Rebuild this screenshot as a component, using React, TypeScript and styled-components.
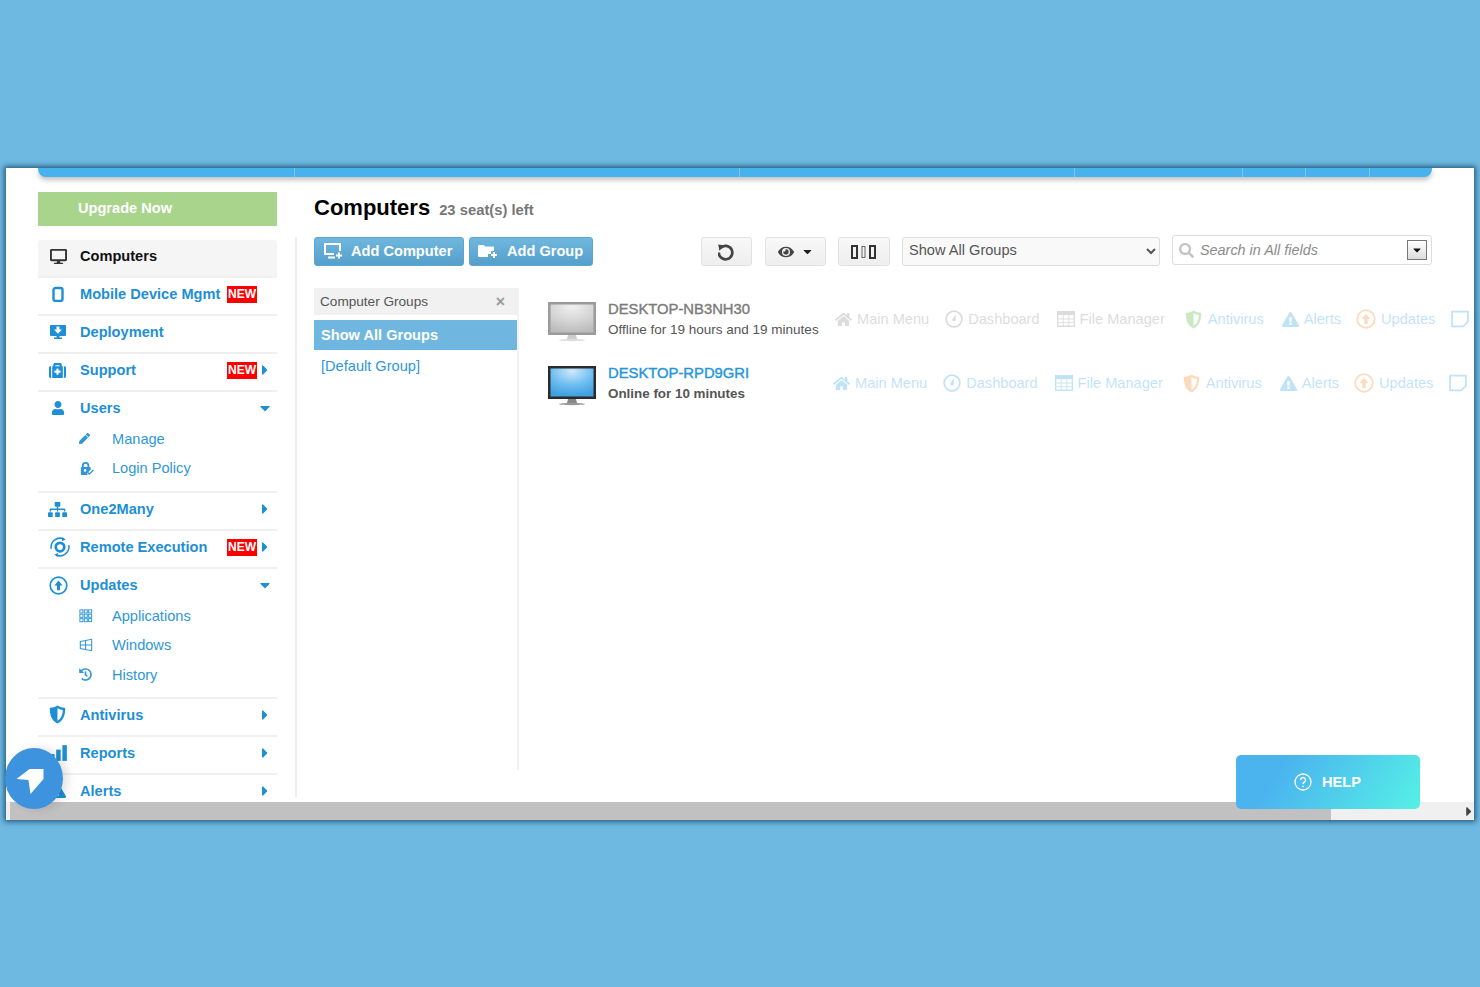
import { FC, ReactNode } from 'react';
import styled, { createGlobalStyle } from 'styled-components';
import {
  FaCaretDown,
  FaCaretRight,
  FaDesktop,
  FaExclamationTriangle,
  FaEye,
  FaHistory,
  FaHome,
  FaMedkit,
  FaPen,
  FaSearch,
  FaSitemap,
  FaUser,
} from 'react-icons/fa';

const GlobalStyle = createGlobalStyle`
  html, body {
    margin: 0;
    padding: 0;
    background: #6db9e1;
  }
  * {
    box-sizing: border-box;
  }
  body {
    font-family: 'Liberation Sans', Arial, sans-serif;
  }
`;

const Page = styled.div`
  height: 987px;
  padding: 168px 6px 167px;
  overflow: hidden;
`;

const Window = styled.div`
  position: relative;
  height: 652px;
  background: #fff;
  display: flex;
  flex-direction: column;
  box-shadow: 0 0 5px 2px #2a5f80;
`;

const TopBar = styled.div`
  flex: none;
  height: 9px;
  margin: 0 42px 0 32px;
  display: flex;
  background: #47b3ee;
  border-radius: 0 0 8px 8px;
  box-shadow: 0 3px 5px rgba(0, 0, 0, 0.25);
`;

const TopSeg = styled.div<{ $w: number }>`
  flex: none;
  width: ${(p) => p.$w}px;
  border-right: 1px solid #7cc6ef;
`;

const Viewport = styled.div`
  flex: 1;
  min-height: 0;
  overflow: hidden;
  display: flex;
  padding: 15px 0 0 32px;
`;

const Sidebar = styled.div`
  flex: none;
  width: 239px;
`;

const Upgrade = styled.div`
  height: 34px;
  margin-bottom: 14px;
  padding-left: 40px;
  background: #a9d48c;
  color: #fff;
  font-size: 14.6px;
  font-weight: 700;
  line-height: 33px;
`;

const Group = styled.div<{ $pad?: number }>`
  border-bottom: 2px solid #f0f0f0;
  padding-bottom: ${(p) => p.$pad ?? 0}px;
`;

const Row = styled.div<{ $active?: boolean }>`
  height: 36px;
  padding-bottom: 4px;
  display: flex;
  align-items: center;
  color: ${(p) => (p.$active ? '#111' : '#1e8fd5')};
  background: ${(p) => (p.$active ? '#f5f5f5' : 'transparent')};
  border-radius: ${(p) => (p.$active ? '3px 3px 0 0' : '0')};
  font-size: 14.6px;
  font-weight: 700;
`;

const RowIcon = styled.span<{ $x?: number }>`
  flex: none;
  width: 42px;
  padding-left: ${(p) => p.$x ?? 12}px;
  display: flex;
  align-items: center;
  color: inherit;
`;

const RowLabel = styled.span`
  flex: 1;
  white-space: nowrap;
`;

const NewBadge = styled.span`
  flex: none;
  width: 30px;
  height: 17px;
  background: #f00;
  color: #fff;
  font-size: 12px;
  font-weight: 700;
  line-height: 17px;
  text-align: center;
`;

const MobileBadge = styled(NewBadge)`
  margin: 0 20px 0 -56px;
`;

const Caret = styled.span`
  flex: none;
  width: 20px;
  padding-right: 4px;
  display: flex;
  justify-content: center;
  color: #1e8fd5;
  font-size: 16px;
`;

const SubList = styled.div`
  margin-top: -4px;
`;

const SubRow = styled.div`
  height: 29.5px;
  display: flex;
  align-items: center;
  padding-left: 41px;
  color: #2f97d8;
  font-size: 14.6px;
`;

const SubIcon = styled.span`
  flex: none;
  width: 33px;
  display: flex;
  align-items: center;
`;

const Main = styled.div`
  flex: 1;
  min-width: 0;
  padding-left: 37px;
`;

const TitleRow = styled.div`
  height: 45px;
  display: flex;
  align-items: baseline;
  padding-top: 3px;
`;

const Title = styled.h1`
  margin: 0;
  color: #000;
  font-size: 22px;
  font-weight: 700;
`;

const Seats = styled.span`
  margin-left: 9px;
  color: #777;
  font-size: 14.8px;
  font-weight: 700;
`;

const Work = styled.div`
  height: 560px;
  margin-left: -19px;
  padding-left: 17px;
  border-left: 2px solid #eee;
`;

const Toolbar = styled.div`
  height: 30px;
  width: 1118px;
  display: flex;
  align-items: flex-start;
`;

const PrimaryButton = styled.button<{ $w: number }>`
  flex: none;
  width: ${(p) => p.$w}px;
  height: 29px;
  margin-right: 5px;
  padding: 0 0 2px 8px;
  display: flex;
  align-items: center;
  gap: 8px;
  background: linear-gradient(#6fb7de, #559fcc);
  border: 1px solid #5ba6d1;
  border-radius: 3px;
  color: #fff;
  font-family: inherit;
  font-size: 14.6px;
  font-weight: 700;
`;

const GreyButton = styled.button<{ $w: number; $ml: number }>`
  flex: none;
  width: ${(p) => p.$w}px;
  height: 29px;
  margin-left: ${(p) => p.$ml}px;
  padding: 0;
  display: flex;
  align-items: center;
  justify-content: center;
  gap: 7px;
  background: linear-gradient(#f8f8f8, #eee);
  border: 1px solid #e2e2e2;
  border-radius: 3px;
  color: #444;
`;

const GroupSelect = styled.select`
  flex: none;
  width: 258px;
  height: 29px;
  margin-left: 12px;
  padding: 0 0 3px 2px;
  background: #f9f9f9;
  border: 1px solid #ddd;
  border-radius: 3px;
  color: #555;
  font-family: inherit;
  font-size: 14.6px;
`;

const SearchBox = styled.div`
  flex: none;
  width: 260px;
  height: 30px;
  margin: -2px 0 0 12px;
  padding: 0 4px 0 6px;
  display: flex;
  align-items: center;
  background: #fff;
  border: 1px solid #ddd;
  border-radius: 3px;
  color: #c4c4c4;
`;

const SearchText = styled.span`
  flex: 1;
  margin-left: 6px;
  color: #8b8b8b;
  font-size: 14.4px;
  font-style: italic;
`;

const SearchDrop = styled.span`
  flex: none;
  width: 20px;
  height: 20px;
  display: flex;
  align-items: center;
  justify-content: center;
  background: linear-gradient(#fff, #ddd);
  border: 1px solid #777;
  color: #111;
  font-size: 12px;
`;

const Panels = styled.div`
  display: flex;
  margin-top: 21px;
`;

const GroupsPanel = styled.div`
  flex: none;
  width: 205px;
  height: 482px;
  border-right: 2px solid #f2f2f2;
`;

const GroupsHead = styled.div`
  height: 27px;
  padding: 0 12px 0 6px;
  display: flex;
  align-items: center;
  justify-content: space-between;
  background: #f1f1f1;
  color: #555;
  font-size: 13.6px;
`;

const GroupsClose = styled.span`
  color: #999;
  font-size: 16px;
  font-weight: 700;
`;

const GroupItem = styled.div<{ $active?: boolean }>`
  height: ${(p) => (p.$active ? '30px' : '32px')};
  margin-top: ${(p) => (p.$active ? '5px' : '0')};
  padding-left: 7px;
  display: flex;
  align-items: center;
  background: ${(p) => (p.$active ? '#6fb7e0' : 'transparent')};
  color: ${(p) => (p.$active ? '#fff' : '#2f97d8')};
  font-size: 14.6px;
  font-weight: ${(p) => (p.$active ? 700 : 400)};
`;

const Computers = styled.div`
  flex: 1;
  min-width: 0;
  padding: 13px 0 0 29px;
  overflow: hidden;
`;

const ComputerRow = styled.div`
  height: 64px;
  width: 940px;
  display: flex;
  align-items: flex-start;
`;

const MonitorWrap = styled.span`
  flex: none;
  margin-top: 1px;
`;

const Info = styled.div<{ $w: number }>`
  flex: none;
  width: ${(p) => p.$w}px;
  margin-left: 12px;
`;

const HostName = styled.div<{ $online?: boolean }>`
  color: ${(p) => (p.$online ? '#2496da' : '#7b7b7b')};
  font-size: 14.8px;
  line-height: 17px;
  white-space: nowrap;
  -webkit-text-stroke: 0.4px currentColor;
`;

const HostStatus = styled.div<{ $online?: boolean }>`
  margin-top: 4px;
  color: #555;
  font-size: ${(p) => (p.$online ? '13.4px' : '13.5px')};
  font-weight: ${(p) => (p.$online ? 700 : 400)};
  line-height: 16px;
  white-space: nowrap;
`;

const Actions = styled.div`
  flex: none;
  display: flex;
  align-items: center;
  margin-top: 8px;
  opacity: 0.3;
`;

const Action = styled.span<{ $c: string; $icon?: string; $gap: number }>`
  flex: none;
  display: flex;
  align-items: center;
  gap: 5px;
  margin-right: ${(p) => p.$gap}px;
  color: ${(p) => p.$c};
  font-size: 14.6px;
  white-space: nowrap;

  svg {
    color: ${(p) => p.$icon ?? p.$c};
  }
`;

const ScrollBar = styled.div`
  flex: none;
  height: 18px;
  padding-left: 4px;
  display: flex;
  align-items: stretch;
  background: #f0f0f0;
`;

const ScrollThumb = styled.div`
  flex: none;
  width: 1321px;
  background: #c1c1c1;
`;

const ScrollArrow = styled.span`
  margin-left: auto;
  width: 10px;
  display: flex;
  align-items: center;
  color: #444;
  font-size: 15px;
`;

const Fab = styled.div`
  position: absolute;
  left: -1px;
  top: 580px;
  width: 58px;
  height: 61px;
  padding-right: 8px;
  border-radius: 50%;
  display: flex;
  align-items: center;
  justify-content: center;
  background: #3d93dd;
  box-shadow: 5px 0 10px rgba(0, 0, 0, 0.12);
`;

const Help = styled.div`
  position: absolute;
  right: 54px;
  bottom: 11px;
  width: 184px;
  height: 54px;
  padding-left: 58px;
  display: flex;
  align-items: center;
  gap: 10px;
  border-radius: 5px;
  background: linear-gradient(125deg, #4bb4ef 25%, #55f1e6 100%);
  color: #fff;
  font-size: 14.6px;
  font-weight: 700;
`;

const Svg: FC<{ s?: number; children: ReactNode }> = ({ s = 16, children }) => (
  <svg width={s} height={s} viewBox="0 0 16 16" fill="currentColor" stroke="none">
    {children}
  </svg>
);

const MobileIcon = () => (
  <Svg>
    <rect x="3.500" y="2" width="9" height="13" rx="2" fill="none" stroke="currentColor" strokeWidth="2.400" />
  </Svg>
);

const DeployIcon = () => (
  <Svg>
    <path d="M1 1h14a1 1 0 0 1 1 1v9a1 1 0 0 1-1 1H9.500v1.500H12V15H4v-1.500h2.500V12H1a1 1 0 0 1-1-1V2a1 1 0 0 1 1-1z" />
    <path d="M6.500 2.500h3V5.500H12L8 9.800 4 5.500h2.500z" fill="#fff" />
  </Svg>
);

const PolicyIcon = () => (
  <Svg s={15}>
    <path d="M3 6.500V5a4 4 0 0 1 8 0v1.500h.5a1 1 0 0 1 1 1V9L8.500 13l.7 2H3a1 1 0 0 1-1-1V7.500a1 1 0 0 1 1-1zm2 0h4V5a2 2 0 0 0-4 0z" fillRule="evenodd" />
    <circle cx="6.500" cy="10" r="1.400" fill="#fff" />
    <path d="M9 12l2 2 4.500-4.500" fill="none" stroke="currentColor" strokeWidth="1.500" />
  </Svg>
);

const RemoteIcon = () => (
  <Svg s={20}>
    <path d="M1 9.500A7.200 7.200 0 0 1 11 1.600M15 6.500A7.200 7.200 0 0 1 5 14.400" fill="none" stroke="currentColor" strokeWidth="1.200" />
    <path d="M10 0l2.500 2-3 1.300zM6 16l-2.500-2 3-1.300z" />
    <circle cx="8" cy="8" r="3.400" fill="none" stroke="currentColor" strokeWidth="2.200" />
  </Svg>
);

const UpCircle: FC<{ s?: number }> = ({ s = 19 }) => (
  <Svg s={s}>
    <circle cx="8" cy="8" r="7" fill="none" stroke="currentColor" strokeWidth="1.400" />
    <path d="M8 3.800L11.500 8H9.300v4H6.700V8H4.500z" />
  </Svg>
);

const GridIcon = () => (
  <Svg s={14}>
    {[1, 6, 11].map((x) =>
      [1, 6, 11].map((y) => (
        <rect key={`${x}-${y}`} x={x} y={y} width="3.500" height="3.500" fill="none" stroke="currentColor" strokeWidth="1.100" />
      )),
    )}
  </Svg>
);

const WindowsIcon = () => (
  <Svg s={14}>
    <path d="M1.500 4l13-2.500v13L1.500 12zM1.500 8h13M7.500 3v10" fill="none" stroke="currentColor" strokeWidth="1.200" />
  </Svg>
);

const ShieldIcon: FC<{ s?: number }> = ({ s = 19 }) => (
  <Svg s={s}>
    <path d="M8 .5c2 1.300 4 1.800 6.500 2 0 5.500-1.200 10.500-6.500 13-5.300-2.500-6.500-7.500-6.500-13C4 2.300 6 1.800 8 .5zm0 2.200v10.600c3.300-2 4.300-5.300 4.500-9.100C11 4 9.500 3.500 8 2.700z" fillRule="evenodd" />
  </Svg>
);

const BarsIcon = () => (
  <Svg s={18}>
    <rect x="0" y="9" width="4" height="6" />
    <rect x="5.500" y="5" width="4" height="10" />
    <rect x="11" y="1" width="4" height="14" />
  </Svg>
);

const DialIcon = () => (
  <Svg s={18}>
    <circle cx="8" cy="8" r="7" fill="none" stroke="currentColor" strokeWidth="1.500" />
    <path d="M9.600 4L9.500 9a1.500 1.500 0 1 1-2.800-1z" />
  </Svg>
);

const TableIcon = () => (
  <Svg s={18}>
    <path d="M.5 1.500h15v13H.5z" fill="none" stroke="currentColor" strokeWidth="1.300" />
    <path d="M.5 1.500h15v3H.5z" />
    <path d="M.5 8h15M.5 11.200h15M5.500 4.500v10M10.500 4.500v10" fill="none" stroke="currentColor" strokeWidth=".8" />
  </Svg>
);

const NoteIcon = () => (
  <Svg s={18}>
    <path d="M1 1.500h14v9l-4 4H1z" fill="none" stroke="currentColor" strokeWidth="1.600" />
  </Svg>
);

const ColumnsIcon = () => (
  <svg width="26" height="16" viewBox="0 0 26 16" fill="none" stroke="#333">
    <rect x="1" y="2" width="5" height="12" strokeWidth="2" />
    <rect x="11" y="2.500" width="3" height="11" strokeWidth="1" stroke="#666" />
    <rect x="19" y="2" width="5" height="12" strokeWidth="2" />
  </svg>
);

const RefreshIcon = () => (
  <Svg s={18}>
    <g transform="translate(-1.300 0)">
      <path d="M3.600 4.400A6 6 0 1 1 2 8.500" fill="none" stroke="currentColor" strokeWidth="2.400" />
      <path d="M1.500 1.300l6 .9-5 4.700z" />
    </g>
  </Svg>
);

const AddComputerIcon = () => (
  <svg width="20" height="18" viewBox="0 0 20 18" fill="none" stroke="#fff" strokeWidth="2">
    <path d="M11 12H2V2h15v7" />
    <path d="M5 15.500h7" />
    <path d="M16 10.500v6M13 13.500h6" />
  </svg>
);

const AddGroupIcon = () => (
  <svg width="21" height="16" viewBox="0 0 21 16" fill="#fff">
    <path d="M0 3a1 1 0 0 1 1-1h5l1 1.500h8a1 1 0 0 1 1 1V8h-3v3h-3v3H1a1 1 0 0 1-1-1z" />
    <path d="M16 9v3h3M16 15v-3h-3" fill="none" stroke="#fff" strokeWidth="2" />
  </svg>
);

const HelpIcon = () => (
  <svg width="18" height="18" viewBox="0 0 18 18" fill="none" stroke="#fff">
    <circle cx="9" cy="9" r="8" strokeWidth="1.300" />
    <path d="M6.500 7a2.500 2.500 0 1 1 3.800 2.100C9.400 9.700 9 10.200 9 11" strokeWidth="1.400" />
    <circle cx="9" cy="13.300" r=".9" fill="#fff" stroke="none" />
  </svg>
);

const Monitor: FC<{ online?: boolean }> = ({ online }) => (
  <svg width="48" height="42" viewBox="0 0 48 42">
    <defs>
      <radialGradient id={online ? 'scrOn' : 'scrOff'} cx="50%" cy="10%" r="90%">
        <stop offset="0%" stopColor={online ? '#cfe9fb' : '#efefef'} />
        <stop offset="55%" stopColor={online ? '#6dbdf0' : '#d5d5d5'} />
        <stop offset="100%" stopColor={online ? '#3f9fe0' : '#bcbcbc'} />
      </radialGradient>
    </defs>
    <rect x="0" y="0" width="48" height="33" fill={online ? '#2b2b2b' : '#9a9a9a'} />
    <rect x="2.500" y="2.500" width="43" height="28" fill={`url(#${online ? 'scrOn' : 'scrOff'})`} />
    <path d="M20 33h8l1 4h-10z" fill={online ? '#888' : '#ccc'} />
    <ellipse cx="24" cy="38" rx="13" ry="1.200" fill={online ? '#999' : '#ddd'} />
  </svg>
);

const RowActions: FC<{ online?: boolean }> = ({ online }) => {
  const grey = online ? '#35a5ea' : '#8f8f8f';
  return (
    <Actions>
      <Action $c={grey} $gap={16}>
        <FaHome size={17} />
        Main Menu
      </Action>
      <Action $c={grey} $gap={17}>
        <DialIcon />
        Dashboard
      </Action>
      <Action $c={grey} $gap={19}>
        <TableIcon />
        File Manager
      </Action>
      <Action $c="#35a5ea" $icon={online ? '#f58a2c' : '#55b83c'} $gap={18}>
        <ShieldIcon />
        Antivirus
      </Action>
      <Action $c="#35a5ea" $gap={15}>
        <FaExclamationTriangle size={17} />
        Alerts
      </Action>
      <Action $c="#35a5ea" $icon="#f58a2c" $gap={16}>
        <UpCircle s={20} />
        Updates
      </Action>
      <Action $c="#35a5ea" $gap={0}>
        <NoteIcon />
      </Action>
    </Actions>
  );
};

const App: FC = () => {
  return (
    <Page>
      <GlobalStyle />
      <Window>
        <TopBar>
          {[257, 445, 335, 168, 63, 64].map((w) => (
            <TopSeg key={w} $w={w} />
          ))}
        </TopBar>
        <Viewport>
          <Sidebar>
            <Upgrade>Upgrade Now</Upgrade>
            <Group>
              <Row $active>
                <RowIcon><FaDesktop size={17} color="#333" /></RowIcon>
                <RowLabel>Computers</RowLabel>
              </Row>
            </Group>
            <Group>
              <Row>
                <RowIcon><MobileIcon /></RowIcon>
                <RowLabel>Mobile Device Mgmt</RowLabel>
                <MobileBadge>NEW</MobileBadge>
              </Row>
            </Group>
            <Group>
              <Row>
                <RowIcon><DeployIcon /></RowIcon>
                <RowLabel>Deployment</RowLabel>
              </Row>
            </Group>
            <Group>
              <Row>
                <RowIcon $x={11}><FaMedkit size={17} /></RowIcon>
                <RowLabel>Support</RowLabel>
                <NewBadge>NEW</NewBadge>
                <Caret><FaCaretRight /></Caret>
              </Row>
            </Group>
            <Group $pad={8}>
              <Row>
                <RowIcon $x={13}><FaUser size={14} /></RowIcon>
                <RowLabel>Users</RowLabel>
                <Caret><FaCaretDown /></Caret>
              </Row>
              <SubList>
                <SubRow><SubIcon><FaPen size={11} /></SubIcon>Manage</SubRow>
                <SubRow><SubIcon><PolicyIcon /></SubIcon>Login Policy</SubRow>
              </SubList>
            </Group>
            <Group>
              <Row>
                <RowIcon $x={10}><FaSitemap size={19} /></RowIcon>
                <RowLabel>One2Many</RowLabel>
                <Caret><FaCaretRight /></Caret>
              </Row>
            </Group>
            <Group>
              <Row>
                <RowIcon><RemoteIcon /></RowIcon>
                <RowLabel>Remote Execution</RowLabel>
                <NewBadge>NEW</NewBadge>
                <Caret><FaCaretRight /></Caret>
              </Row>
            </Group>
            <Group $pad={7}>
              <Row>
                <RowIcon $x={11}><UpCircle /></RowIcon>
                <RowLabel>Updates</RowLabel>
                <Caret><FaCaretDown /></Caret>
              </Row>
              <SubList>
                <SubRow><SubIcon><GridIcon /></SubIcon>Applications</SubRow>
                <SubRow><SubIcon><WindowsIcon /></SubIcon>Windows</SubRow>
                <SubRow><SubIcon><FaHistory size={13} /></SubIcon>History</SubRow>
              </SubList>
            </Group>
            <Group>
              <Row>
                <RowIcon $x={10}><ShieldIcon /></RowIcon>
                <RowLabel>Antivirus</RowLabel>
                <Caret><FaCaretRight /></Caret>
              </Row>
            </Group>
            <Group>
              <Row>
                <RowIcon><BarsIcon /></RowIcon>
                <RowLabel>Reports</RowLabel>
                <Caret><FaCaretRight /></Caret>
              </Row>
            </Group>
            <Group>
              <Row>
                <RowIcon $x={11}><FaExclamationTriangle size={17} /></RowIcon>
                <RowLabel>Alerts</RowLabel>
                <Caret><FaCaretRight /></Caret>
              </Row>
            </Group>
          </Sidebar>
          <Main>
            <TitleRow>
              <Title>Computers</Title>
              <Seats>23 seat(s) left</Seats>
            </TitleRow>
            <Work>
              <Toolbar>
                <PrimaryButton $w={150}><AddComputerIcon />Add Computer</PrimaryButton>
                <PrimaryButton $w={124}><AddGroupIcon />Add Group</PrimaryButton>
                <GreyButton $w={51} $ml={103}><RefreshIcon /></GreyButton>
                <GreyButton $w={61} $ml={13}><FaEye size={16} /><FaCaretDown size={13} color="#222" /></GreyButton>
                <GreyButton $w={52} $ml={12}><ColumnsIcon /></GreyButton>
                <GroupSelect defaultValue="all">
                  <option value="all">Show All Groups</option>
                </GroupSelect>
                <SearchBox>
                  <FaSearch size={15} />
                  <SearchText>Search in All fields</SearchText>
                  <SearchDrop><FaCaretDown /></SearchDrop>
                </SearchBox>
              </Toolbar>
              <Panels>
                <GroupsPanel>
                  <GroupsHead>
                    Computer Groups
                    <GroupsClose>×</GroupsClose>
                  </GroupsHead>
                  <GroupItem $active>Show All Groups</GroupItem>
                  <GroupItem>[Default Group]</GroupItem>
                </GroupsPanel>
                <Computers>
                  <ComputerRow>
                    <MonitorWrap><Monitor /></MonitorWrap>
                    <Info $w={227}>
                      <HostName>DESKTOP-NB3NH30</HostName>
                      <HostStatus>Offline for 19 hours and 19 minutes</HostStatus>
                    </Info>
                    <RowActions />
                  </ComputerRow>
                  <ComputerRow>
                    <MonitorWrap><Monitor online /></MonitorWrap>
                    <Info $w={225}>
                      <HostName $online>DESKTOP-RPD9GRI</HostName>
                      <HostStatus $online>Online for 10 minutes</HostStatus>
                    </Info>
                    <RowActions online />
                  </ComputerRow>
                </Computers>
              </Panels>
            </Work>
          </Main>
        </Viewport>
        <ScrollBar>
          <ScrollThumb />
          <ScrollArrow><FaCaretRight /></ScrollArrow>
        </ScrollBar>
        <Fab>
          <svg width="30" height="30" viewBox="0 0 30 30" fill="#fff">
            <path d="M1.500 15L14.500 5h14v10L15.500 30l-2-14z" />
          </svg>
        </Fab>
        <Help>
          <HelpIcon />
          HELP
        </Help>
      </Window>
    </Page>
  );
};

export default App;
